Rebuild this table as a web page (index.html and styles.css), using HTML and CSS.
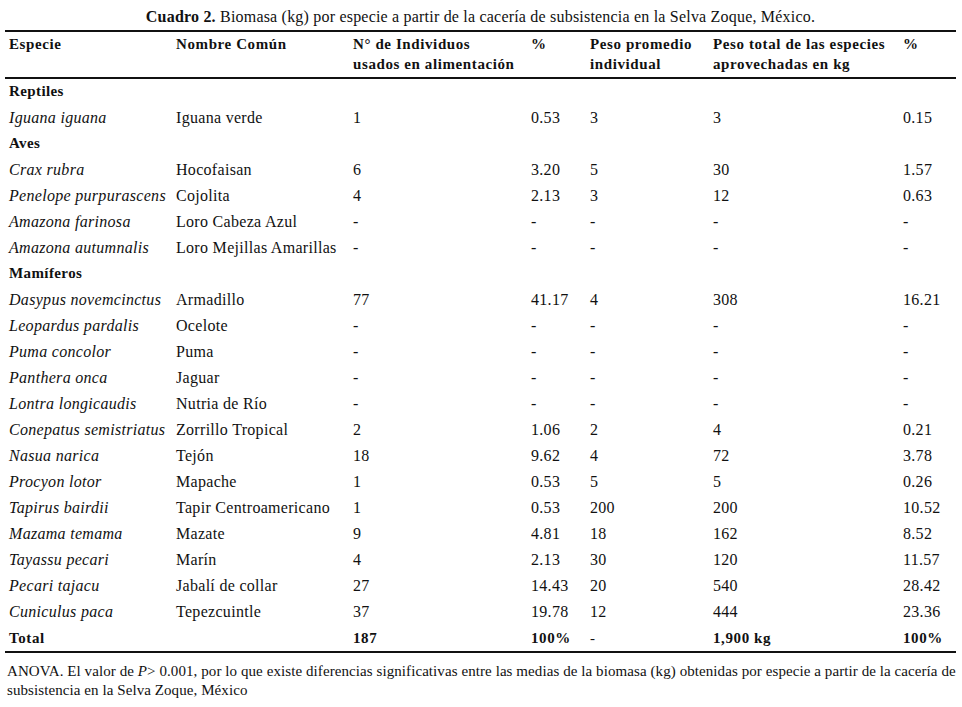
FILE: index.html
```html
<!DOCTYPE html>
<html lang="es">
<head>
<meta charset="utf-8">
<title>Cuadro 2</title>
<link rel="stylesheet" href="styles.css">
</head>
<body>
<div class="page">
  <p class="caption"><b>Cuadro 2.</b> Biomasa (kg) por especie a partir de la cacería de subsistencia en la Selva Zoque, México.</p>
  <table class="data">
    <colgroup>
      <col class="c1"><col class="c2"><col class="c3"><col class="c4"><col class="c5"><col class="c6"><col class="c7">
    </colgroup>
    <thead>
      <tr>
        <th>Especie</th>
        <th>Nombre Común</th>
        <th>N° de Individuos<br>usados en alimentación</th>
        <th>%</th>
        <th>Peso promedio<br>individual</th>
        <th>Peso total de las especies<br>aprovechadas en kg</th>
        <th>%</th>
      </tr>
    </thead>
    <tbody>
      <tr class="group"><td colspan="7">Reptiles</td></tr>
      <tr><td class="sp">Iguana iguana</td><td>Iguana verde</td><td>1</td><td>0.53</td><td>3</td><td>3</td><td>0.15</td></tr>
      <tr class="group"><td colspan="7">Aves</td></tr>
      <tr><td class="sp">Crax rubra</td><td>Hocofaisan</td><td>6</td><td>3.20</td><td>5</td><td>30</td><td>1.57</td></tr>
      <tr><td class="sp">Penelope purpurascens</td><td>Cojolita</td><td>4</td><td>2.13</td><td>3</td><td>12</td><td>0.63</td></tr>
      <tr><td class="sp">Amazona farinosa</td><td>Loro Cabeza Azul</td><td>-</td><td>-</td><td>-</td><td>-</td><td>-</td></tr>
      <tr><td class="sp">Amazona autumnalis</td><td>Loro Mejillas Amarillas</td><td>-</td><td>-</td><td>-</td><td>-</td><td>-</td></tr>
      <tr class="group"><td colspan="7">Mamíferos</td></tr>
      <tr><td class="sp">Dasypus novemcinctus</td><td>Armadillo</td><td>77</td><td>41.17</td><td>4</td><td>308</td><td>16.21</td></tr>
      <tr><td class="sp">Leopardus pardalis</td><td>Ocelote</td><td>-</td><td>-</td><td>-</td><td>-</td><td>-</td></tr>
      <tr><td class="sp">Puma concolor</td><td>Puma</td><td>-</td><td>-</td><td>-</td><td>-</td><td>-</td></tr>
      <tr><td class="sp">Panthera onca</td><td>Jaguar</td><td>-</td><td>-</td><td>-</td><td>-</td><td>-</td></tr>
      <tr><td class="sp">Lontra longicaudis</td><td>Nutria de Río</td><td>-</td><td>-</td><td>-</td><td>-</td><td>-</td></tr>
      <tr><td class="sp">Conepatus semistriatus</td><td>Zorrillo Tropical</td><td>2</td><td>1.06</td><td>2</td><td>4</td><td>0.21</td></tr>
      <tr><td class="sp">Nasua narica</td><td>Tejón</td><td>18</td><td>9.62</td><td>4</td><td>72</td><td>3.78</td></tr>
      <tr><td class="sp">Procyon lotor</td><td>Mapache</td><td>1</td><td>0.53</td><td>5</td><td>5</td><td>0.26</td></tr>
      <tr><td class="sp">Tapirus bairdii</td><td>Tapir Centroamericano</td><td>1</td><td>0.53</td><td>200</td><td>200</td><td>10.52</td></tr>
      <tr><td class="sp">Mazama temama</td><td>Mazate</td><td>9</td><td>4.81</td><td>18</td><td>162</td><td>8.52</td></tr>
      <tr><td class="sp">Tayassu pecari</td><td>Marín</td><td>4</td><td>2.13</td><td>30</td><td>120</td><td>11.57</td></tr>
      <tr><td class="sp">Pecari tajacu</td><td>Jabalí de collar</td><td>27</td><td>14.43</td><td>20</td><td>540</td><td>28.42</td></tr>
      <tr><td class="sp">Cuniculus paca</td><td>Tepezcuintle</td><td>37</td><td>19.78</td><td>12</td><td>444</td><td>23.36</td></tr>
      <tr class="total"><td>Total</td><td></td><td>187</td><td>100%</td><td class="plain">-</td><td>1,900 kg</td><td>100%</td></tr>
    </tbody>
  </table>
  <p class="note">ANOVA. El valor de <i>P</i>&gt; 0.001, por lo que existe diferencias significativas entre las medias de la biomasa (kg) obtenidas por especie a partir de la cacería de subsistencia en la Selva Zoque, México</p>
</div>
</body>
</html>
```

FILE: styles.css
```css
html, body {
  margin: 0;
  padding: 0;
  background: #fff;
}

.page {
  width: 962px;
  padding: 8px 0 0 5px;
  box-sizing: border-box;
  font-family: "Liberation Serif", "Times New Roman", serif;
  color: #111;
}

.caption {
  margin: 0;
  width: 951px;
  text-align: center;
  font-size: 16px;
  letter-spacing: 0.2px;
  line-height: 18px;
  height: 22px;
}

.data {
  width: 951px;
  border-collapse: collapse;
  table-layout: fixed;
  border-top: 2px solid #111;
  border-bottom: 2px solid #111;
}

.c1 { width: 167px; }
.c2 { width: 177px; }
.c3 { width: 178px; }
.c4 { width: 59px; }
.c5 { width: 123px; }
.c6 { width: 190px; }
.c7 { width: 57px; }

.data th {
  text-align: left;
  vertical-align: top;
  font-weight: bold;
  font-size: 15px;
  letter-spacing: 0.6px;
  line-height: 20px;
  padding: 2px 0 3px 4px;
  border-bottom: 2px solid #111;
}

.data td {
  font-size: 16px;
  letter-spacing: 0.3px;
  height: 26px;
  padding: 0 0 0 4px;
  line-height: 18px;
  white-space: nowrap;
  vertical-align: middle;
}

.data td.sp {
  font-style: italic;
  letter-spacing: 0.3px;
}

.data tr.group td {
  font-weight: bold;
  font-size: 15px;
  letter-spacing: 0.4px;
  vertical-align: top;
  padding-top: 3px;
  height: 23px;
}

.data tr.total td {
  font-weight: bold;
  font-size: 15px;
  letter-spacing: 0.6px;
}

.data tr.total td.plain {
  font-weight: normal;
}

.note {
  margin: 9px 0 0 2px;
  width: 955px;
  font-size: 15px;
  letter-spacing: 0.08px;
  line-height: 19px;
}
```
